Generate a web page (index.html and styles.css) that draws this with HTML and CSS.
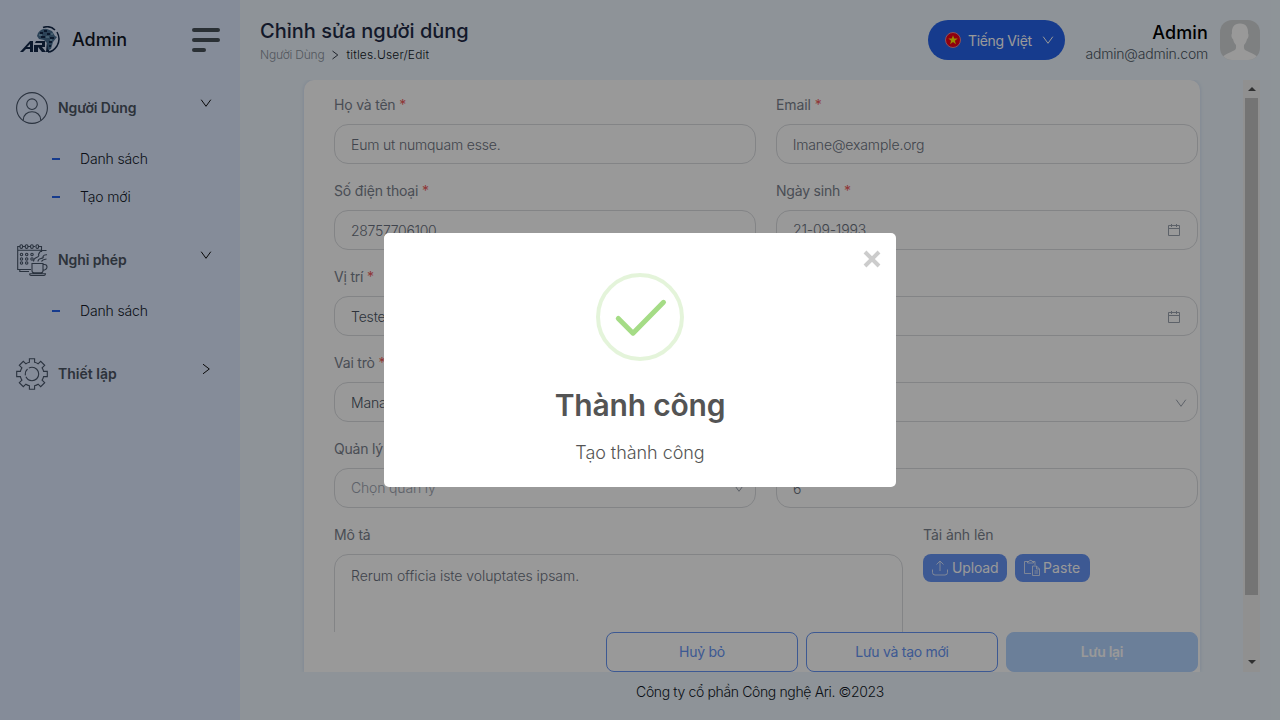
FILE: index.html
```html
<!DOCTYPE html>
<html lang="vi">
<head>
<meta charset="utf-8">
<title>Chỉnh sửa người dùng</title>
<link rel="stylesheet" href="styles.css">
</head>
<body>
<svg class="defs" width="0" height="0">
  <symbol id="down" viewBox="0 0 12 12"><path d="M1.2 2.7 6 9.3 10.8 2.7" fill="none" stroke="currentColor" stroke-width="1"/></symbol>
  <symbol id="right" viewBox="0 0 12 12"><path d="M3 1.2 9.3 6 3 10.8" fill="none" stroke="currentColor" stroke-width="1"/></symbol>
  <symbol id="cal" viewBox="0 0 14 14"><path d="M1.500 2.500h11v10h-11zM1.500 5.500h11M4.500 1v3M9.500 1v3" fill="none" stroke="currentColor"/></symbol>
</svg>
<div class="app">
  <aside class="sidebar">
    <div class="brand">
      <svg class="logo" width="42" height="28" viewBox="0 0 42 28">
        <path d="M1 26 11 15h3v11h-3v-3H7l-3 3zM8 21h3v-3zM15 26V19h8v-2h-7l1-2h9v6h-3l4 5h-4l-4-5v5zM27 26l1-11h3l-1 11z" fill="#13294a"/>
        <path d="M24 1.500Q31-1 36 4M38 6Q42 13 38 20 34 26 29 26" fill="none" stroke="#13294a" stroke-width="1.500"/>
        <path d="M19 7q4-5 9-4l5 2 3 5 2 1-4 5-2 7-3 1-1-7-3-3-5-1-2-3z" fill="#496f92"/>
        <path d="M21 7h3M25 5h3M22 11h4M28 8h3M31 12h4M30 16h3M30 20h2" stroke="#13294a" stroke-width="2"/>
        <path d="M20 9h3M27 11h3M32 8h2M31 14h2" stroke="#9fcbe2" stroke-width="1.2"/>
      </svg>
      <span class="brand-name">Admin</span>
      <span class="burger"><i></i><i></i><i></i></span>
    </div>
    <nav>
      <div class="menu-item">
        <svg class="menu-icon" width="32" height="32" viewBox="0 0 32 32"><circle cx="16" cy="16" r="15.4"/><circle cx="16" cy="12.2" r="5.3"/><path d="M7.3 28.5v-1a8.7 7.8 0 0 1 17.4 0v1"/></svg>
        <span class="t-user">Người Dùng</span><svg class="arrow"><use href="#down"/></svg>
      </div>
      <div class="sub"><i></i><span>Danh sách</span></div>
      <div class="sub"><i></i><span>Tạo mới</span></div>
      <div class="menu-item spaced">
        <svg class="menu-icon" width="32" height="32" viewBox="0 0 32 32"><path d="M15 25.500H1.700V2.500H4M7 2.500h2M12 2.500h2M17 2.500h2M22 2.500h3.500V8M1.700 6.200H25.500M3.800 25.500v2H13"/><rect x="4" y=".7" width="2.600" height="3.700" rx="1.200"/><rect x="9.300" y=".7" width="2.600" height="3.700" rx="1.200"/><rect x="14.600" y=".7" width="2.600" height="3.700" rx="1.200"/><rect x="20" y=".7" width="2.600" height="3.700" rx="1.200"/><circle cx="5.500" cy="10.500" r="1.200"/><circle cx="10.700" cy="10.500" r="1.200"/><circle cx="16" cy="10.500" r="1.200"/><circle cx="5.500" cy="15" r="1.200"/><circle cx="10.700" cy="15" r="1.200"/><circle cx="16" cy="15" r="1.200"/><circle cx="5.500" cy="19" r="1.200"/><circle cx="10.700" cy="19" r="1.200"/><path d="M16 19.500h11v7.200q0 2-2 2h-7q-2 0-2-2zM27 20.500h1.500q2.500 0 2.500 2.500t-4 3.500M13.500 29.700h16q0 1.800-2 1.800h-12q-2 0-2-1.800M17.500 17.500q0-3 3-4t2-3q1-3.500 4-4h4M22 17.500q0-2.500 3-3t2-2q1-2 4-1.700M25.500 17.500q1-2 5-2.500"/></svg>
        <span class="t-leave">Nghỉ phép</span><svg class="arrow"><use href="#down"/></svg>
      </div>
      <div class="sub"><i></i><span>Danh sách</span></div>
      <div class="menu-item spaced">
        <svg class="menu-icon" width="32" height="32" viewBox="0 0 32 32"><path d="M13.400.7h5.200v3.600q2 .5 3.500 1.500L24.700 3.300l4 4-2.600 2.600q1 1.500 1.500 3.500h3.700v5.200h-3.700q-.5 2-1.500 3.500l2.600 2.600-4 4-2.600-2.500q-1.500 1-3.500 1.500v3.600h-5.200v-3.600q-2-.5-3.500-1.500L7.300 28.700l-4-4 2.600-2.600q-1-1.500-1.500-3.500H.7v-5.200h3.700q.5-2 1.500-3.500L3.300 7.300l4-4 2.600 2.500q1.500-1 3.500-1.500z"/><circle cx="16" cy="16" r="6.700" stroke-dasharray="18 1.500 7 1.500"/></svg>
        <span class="t-set">Thiết lập</span><svg class="arrow"><use href="#right"/></svg>
      </div>
    </nav>
  </aside>
  <main class="main">
    <header class="header">
      <div class="heading">
        <h1>Chỉnh sửa người dùng</h1>
        <div class="crumbs"><span class="c1">Người Dùng</span><svg width="10" height="10"><use href="#right"/></svg><span class="c2">titles.User/Edit</span></div>
      </div>
      <div class="lang">
        <svg width="16" height="16" viewBox="0 0 16 16"><circle cx="8" cy="8" r="7.5" fill="#f00018" stroke="#e98a98"/><path d="m8 3.200 1.200 3.400h3.500L9.900 8.700l1 3.500L8 10.100l-2.900 2.100 1-3.500-2.800-2.100h3.500z" fill="#ffe900"/></svg>
        <span>Tiếng Việt</span><svg width="12" height="12"><use href="#down"/></svg>
      </div>
      <div class="account"><b>Admin</b><span>admin@admin.com</span></div>
      <svg class="avatar" width="40" height="40" viewBox="0 0 40 40"><path fill="#d3d6d8" d="M0 0h40v40H0z"/><path d="M20 3.500c6 0 8.500 4 8 10 1 1 .5 5-1 5.500-.5 3-2 5-3 6-.5 5 1 5 5 7s7 3 8.500 5V40h-35v-3c1.500-2 4.500-3 8.500-5s5.500-2 5-7c-1-1-2.500-3-3-6-1.500-.5-2-4.500-1-5.500-.5-6 2-10 8-10z" fill="#fff"/></svg>
    </header>
    <div class="scroll">
      <section class="card">
        <div class="grid">
          <div class="field"><label>Họ và tên <em>*</em></label><div class="input"><span>Eum ut numquam esse.</span></div></div>
          <div class="field"><label class="plain">Email <em>*</em></label><div class="input"><span class="mail">lmane@example.org</span></div></div>
          <div class="field"><label>Số điện thoại <em>*</em></label><div class="input"><span class="digits">28757706100</span></div></div>
          <div class="field"><label>Ngày sinh <em>*</em></label><div class="input up"><span>21-09-1993</span><svg width="14" height="14"><use href="#cal"/></svg></div></div>
          <div class="field"><label>Vị trí <em>*</em></label><div class="input"><span class="dark">Tester</span></div></div>
          <div class="field"><label>&nbsp;</label><div class="input"><span></span><svg width="14" height="14"><use href="#cal"/></svg></div></div>
          <div class="field"><label>Vai trò <em>*</em></label><div class="input"><span class="dark">Manager</span></div></div>
          <div class="field"><label>&nbsp;</label><div class="input"><span></span><svg class="sel" width="12" height="12"><use href="#down"/></svg></div></div>
          <div class="field"><label>Quản lý</label><div class="input up"><span class="ph">Chọn quản lý</span><svg class="sel" width="12" height="12"><use href="#down"/></svg></div></div>
          <div class="field"><label>&nbsp;</label><div class="input"><span>6</span></div></div>
        </div>
        <div class="last">
          <div class="field desc"><label>Mô tả</label><div class="input area"><span class="long">Rerum officia iste voluptates ipsam.</span></div></div>
          <div class="field"><label class="plain">Tải ảnh lên</label>
            <div class="files">
              <div class="mini"><svg width="18" height="18" viewBox="0 0 18 18"><path d="M9 12V2M5.500 5.500 9 2l3.500 3.500M1.500 10.500v3q0 2.500 2.500 2.500h10q2.500 0 2.500-2.500v-3"/></svg><span>Upload</span></div>
              <div class="mini paste"><svg width="18" height="18" viewBox="0 0 18 18"><path d="M8 14.500H1.500v-12h4M9 2.500h3V6M4.500 4V2.500h1.500q.8-2 2-1 .8-.5 1 1H10.500V4zM9.500 7h4l3 3v6.500h-7zM13.500 7v3h3M11.500 12h3.500M11.500 14h3.500"/></svg><span>Paste</span></div>
            </div>
          </div>
        </div>
        <div class="actions"><div class="btn"><span>Huỷ bỏ</span></div><div class="btn"><span>Lưu và tạo mới</span></div><div class="btn primary"><span>Lưu lại</span></div></div>
      </section>
      <div class="bar"><i class="tri"></i><div class="thumb"></div><i class="tri down"></i></div>
    </div>
    <footer><span>Công ty cổ phần Công nghệ Ari. ©2023</span></footer>
  </main>
</div>
<div class="overlay">
  <div class="modal">
    <svg class="close" width="18" height="18" viewBox="0 0 18 18"><path d="M2 2l14 14M16 2 2 16" stroke="#ccc" stroke-width="4"/></svg>
    <svg class="ok" width="88" height="88" viewBox="0 0 88 88"><circle cx="44" cy="44" r="42" fill="none" stroke="#a5dc86" stroke-opacity=".3" stroke-width="4"/><path d="M22.300 45.500 37 60.200 67.500 29.300" fill="none" stroke="#a5dc86" stroke-width="5" stroke-linecap="round" stroke-linejoin="round"/></svg>
    <h2><span>Thành công</span></h2>
    <p><span>Tạo thành công</span></p>
  </div>
</div>
</body>
</html>
```
FILE: styles.css
```css
* { box-sizing: border-box; }
body { margin: 0; width: 1280px; height: 720px; overflow: hidden; font-family: Inter, "Noto Sans", sans-serif; font-size: 14px; font-weight: 300; line-height: 22px; color: #111827; }
i, em { font-style: normal; }
.defs { position: absolute; }
span, b, label, h1 { white-space: nowrap; }
.app { display: flex; height: 720px; background: #edf6fd; }

.sidebar { width: 240px; background: #dee9ff; }
.brand { display: flex; align-items: center; height: 80px; padding: 0 20px 0 19px; }
.brand-name { flex: 1; margin-left: 11px; font-size: 18px; font-weight: 500; letter-spacing: 0; }
.burger { display: grid; gap: 6px; width: 28px; }
.burger i { height: 4px; border-radius: 2px; background: #475159; }
.burger i:last-child { width: 14px; }
nav { padding-top: 8px; }
.menu-item { display: flex; align-items: center; height: 40px; padding: 0 28px 0 16px; color: #4b5563; font-weight: 600; }
.menu-item span { flex: 1; margin-left: 10px; letter-spacing: -.1px; }
.menu-item .t-set { letter-spacing: 0; }
.menu-icon { fill: none; stroke: #475569; stroke-width: 1.1; }
.arrow { width: 12px; height: 12px; margin-bottom: 10px; color: #111; }
.sub { display: flex; align-items: center; height: 38px; padding-left: 52px; gap: 20px; letter-spacing: -.15px; }
.menu-item + .sub { margin-top: 12px; }
.sub i { width: 8px; height: 2px; background: #2563eb; }
.spaced { margin-top: 24px; }

.main { width: 1040px; display: flex; flex-direction: column; }
.header { display: flex; align-items: center; height: 80px; padding: 0 20px; }
.heading { flex: 1; padding-top: 0; }
h1 { margin: 0; font-size: 20px; line-height: 28px; font-weight: 500; letter-spacing: 0; color: #1f2b46; }
.crumbs { display: flex; align-items: center; gap: 6px; padding-top: 1px; font-size: 12px; line-height: 18px; }
.c1 { color: #8b929d; letter-spacing: -.22px; }
.c2 { letter-spacing: .17px; }
.lang { display: flex; align-items: center; width: 137px; height: 40px; padding: 0 11px 0 17px; border-radius: 20px; background: #2563eb; color: #fff; font-weight: 400; }
.lang span { flex: 1; margin: 2px 0 0 7px; letter-spacing: -.35px; }
.account { width: 123px; margin: 4px 12px 0 20px; display: flex; flex-direction: column; align-items: flex-end; line-height: 19px; color: #4b5563; letter-spacing: -.2px; }
.account b { font-size: 18px; font-weight: 500; color: #000; line-height: 23px; letter-spacing: .15px; }
.avatar { border-radius: 12px; }

.scroll { height: 592px; display: flex; justify-content: space-between; padding: 0 20px 0 64px; }
.card { width: 896px; height: 592px; padding: 10px 2px 0 30px; display: flex; flex-direction: column; border-radius: 10px 10px 0 0; background: #fff; box-shadow: 0 0 4px #cbdaf5; clip-path: inset(0 -6px 0 -6px); }
.grid { display: grid; grid-template-columns: 422px 422px; column-gap: 20px; flex: none; }
.field { height: 86px; }
label { display: block; height: 30px; margin-bottom: 4px; line-height: 30px; color: #7b828e; font-weight: 400; letter-spacing: -.2px; }
.plain { letter-spacing: -.08px; }
em { color: #ef5c5c; letter-spacing: 0; }
.input { display: flex; align-items: center; justify-content: space-between; height: 40px; padding: 2px 16px 0; border: 1px solid #dadce0; border-radius: 14px; color: #6b7280; letter-spacing: -.17px; }
.mail { letter-spacing: -.13px; }
.digits { letter-spacing: -.3px; }
.long { letter-spacing: -.06px; }
.input svg { color: #9ca3af; }
.input .sel { margin-right: -6px; }
.up { padding-top: 0; }
.input .dark { color: #4b5563; }
.input .ph { color: #9ca3af; }
.last { display: flex; gap: 20px; height: 112px; overflow: hidden; flex: none; }
.desc { width: 569px; }
.area { height: 100px; align-items: flex-start; padding-top: 10px; }
.files { display: flex; gap: 8px; }
.mini { display: flex; align-items: center; gap: 3px; width: 84px; height: 28px; padding-left: 8px; border-radius: 8px; background: #6694f5; color: #fff; font-weight: 400; letter-spacing: -.15px; }
.paste { width: 75px; gap: 2px; letter-spacing: .1px; }
.mini svg { fill: none; stroke: #dfe9fd; stroke-width: .9; flex: none; }
.actions { display: flex; justify-content: flex-end; gap: 8px; height: 40px; background: #fff; flex: none; }
.btn { display: grid; place-items: center; width: 192px; border: 1px solid #6694f5; border-radius: 8px; color: #6694f5; font-weight: 400; letter-spacing: -.28px; }
.primary { background: #b3d4ff; border-color: #b3d4ff; color: #fff; font-weight: 600; letter-spacing: -.3px; }
.bar { width: 17px; height: 592px; background: #f1f1f1; display: flex; flex-direction: column; align-items: center; }
.tri { margin: 7px 0; border: solid transparent; border-width: 0 4px 4px; border-bottom-color: #505050; }
.thumb { width: 13px; height: 497px; background: #c1c1c1; margin-bottom: 58px; }
.down { border-width: 4px 4px 0; border-top-color: #505050; }
footer { height: 48px; padding-top: 9px; text-align: center; letter-spacing: -.36px; }

.overlay { position: absolute; inset: 0; display: grid; place-items: center; background: rgba(0, 0, 0, .4); }
.modal { position: relative; width: 512px; height: 254px; padding-top: 40px; border-radius: 5px; background: #fff; text-align: center; color: #545454; }
.close { position: absolute; right: 15px; top: 17px; }
.ok { display: block; margin: 0 auto; }
h2 { margin: 26px 0 0; font-size: 30px; line-height: 36px; font-weight: 600; letter-spacing: -.2px; }
p { margin: 17px 0 0; font-size: 18px; line-height: 26px; letter-spacing: -.05px; }
```
